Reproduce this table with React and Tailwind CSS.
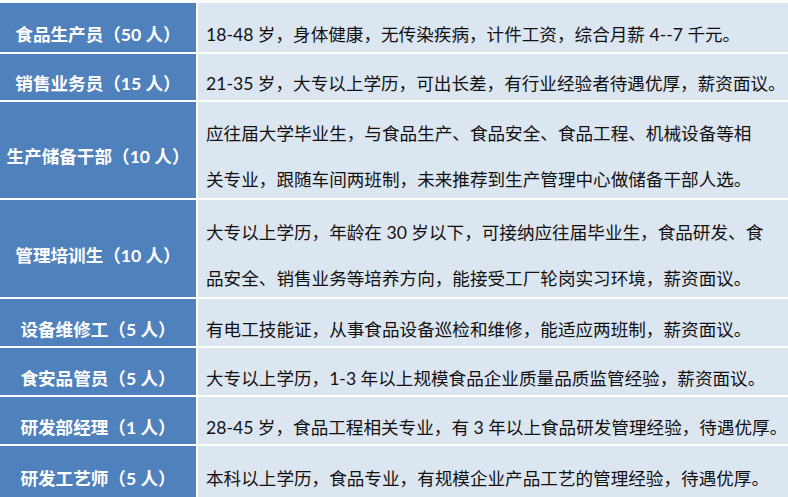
const rows = [
  {
    title: "食品生产员（50 人）",
    h: "h-[49px]",
    lines: ["18-48 岁，身体健康，无传染疾病，计件工资，综合月薪 4--7 千元。"],
  },
  {
    title: "销售业务员（15 人）",
    h: "h-[46px]",
    lines: ["21-35 岁，大专以上学历，可出长差，有行业经验者待遇优厚，薪资面议。"],
  },
  {
    title: "生产储备干部（10 人）",
    h: "h-[96px]",
    lines: [
      "应往届大学毕业生，与食品生产、食品安全、食品工程、机械设备等相",
      "关专业，跟随车间两班制，未来推荐到生产管理中心做储备干部人选。",
    ],
  },
  {
    title: "管理培训生（10 人）",
    h: "h-[97px]",
    lines: [
      "大专以上学历，年龄在 30 岁以下，可接纳应往届毕业生，食品研发、食",
      "品安全、销售业务等培养方向，能接受工厂轮岗实习环境，薪资面议。",
    ],
  },
  {
    title: "设备维修工（5 人）",
    h: "h-[47px]",
    lines: ["有电工技能证，从事食品设备巡检和维修，能适应两班制，薪资面议。"],
  },
  {
    title: "食安品管员（5 人）",
    h: "h-[47px]",
    lines: ["大专以上学历，1-3 年以上规模食品企业质量品质监管经验，薪资面议。"],
  },
  {
    title: "研发部经理（1 人）",
    h: "h-[47px]",
    lines: ["28-45 岁，食品工程相关专业，有 3 年以上食品研发管理经验，待遇优厚。"],
  },
  {
    title: "研发工艺师（5 人）",
    h: "h-[51px]",
    lines: ["本科以上学历，食品专业，有规模企业产品工艺的管理经验，待遇优厚。"],
  },
]

export default function App() {
  return (
    <div
      className="w-[788px] h-[497px] overflow-hidden bg-white pt-[3px] flex flex-col gap-[2px]"
      style={{ fontFamily: 'Lato, "Noto Sans CJK SC", sans-serif' }}
    >
      {rows.map((row) => (
        <div
          key={row.title}
          className={`grid grid-cols-[196px_1fr] grid-rows-[minmax(0,1fr)] gap-x-[2px] shrink-0 ${row.h}`}
        >
          {/* job title */}
          <div className="bg-[#4f81bd] min-h-0 flex items-center justify-center pt-[14px]">
            <span className="text-white font-bold text-[17.6px] whitespace-nowrap leading-[24px]">{row.title}</span>
          </div>
          {/* requirements */}
          <div className="bg-[#dce6f1] min-h-0 flex flex-col justify-center pl-[8px] pt-[14px]">
            {row.lines.map((line) => (
              <p
                key={line}
                className={`text-[#111] text-[17.6px] whitespace-nowrap ${row.lines.length > 1 ? "leading-[46px]" : "leading-[24px]"}`}
              >
                {line}
              </p>
            ))}
          </div>
        </div>
      ))}
    </div>
  )
}
